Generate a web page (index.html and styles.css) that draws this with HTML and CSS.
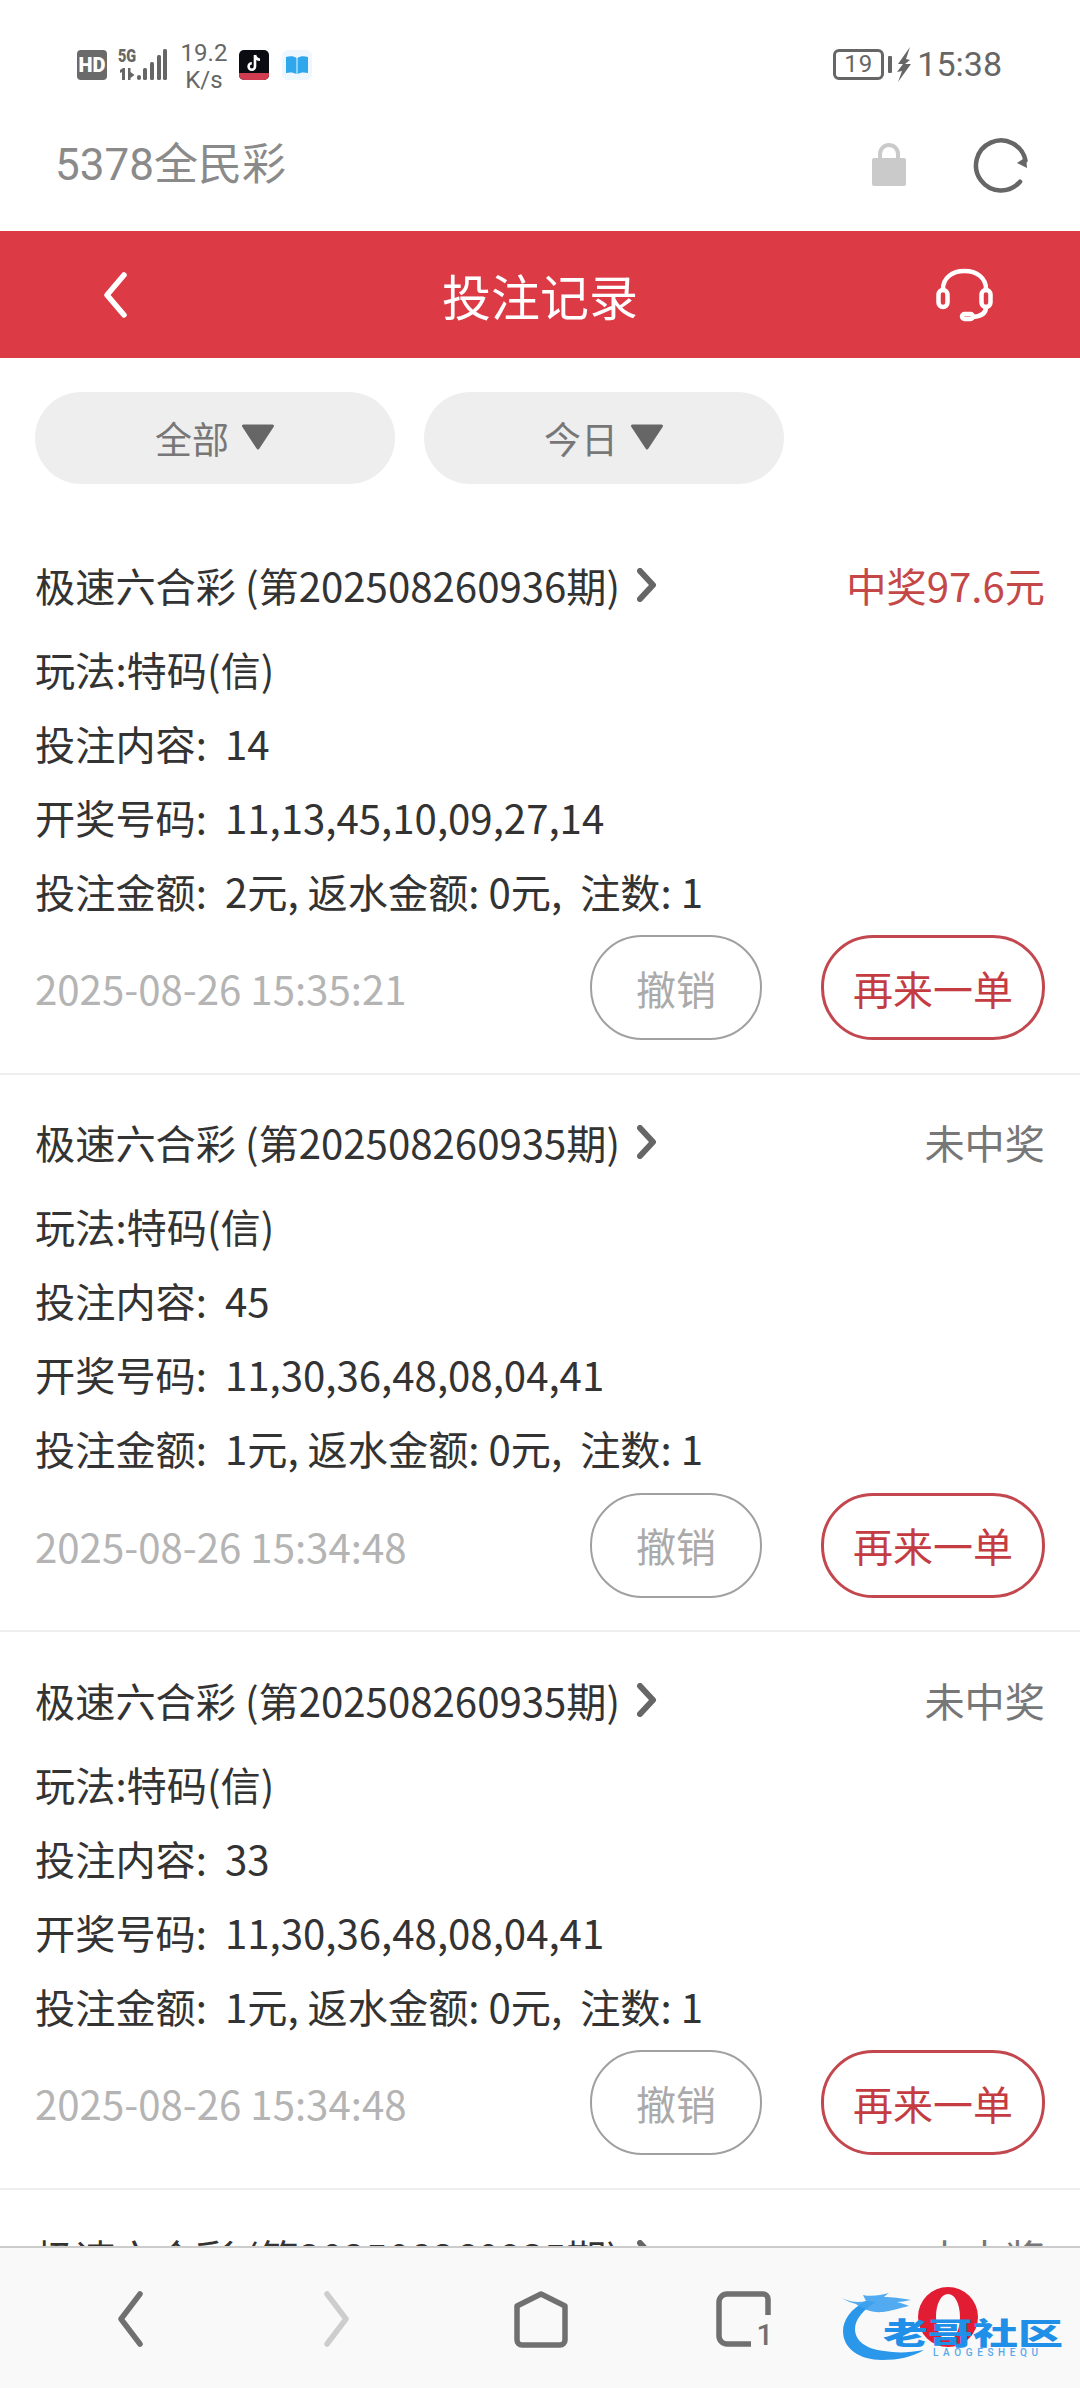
FILE: index.html
```
<!DOCTYPE html>
<html lang="zh">
<head>
<meta charset="utf-8">
<title>投注记录</title>
<link rel="stylesheet" href="styles.css">
</head>
<body>
<div class="screen">
  <div class="statusbar">
    <div class="status-left">
      <svg class="ic-hd" width="30" height="30" viewBox="0 0 30 30"><rect width="30" height="30" rx="4" fill="#6a6a6a"/><text x="15" y="22" text-anchor="middle" class="hd-text">HD</text></svg>
      <div class="signal">
        <span class="five-g">5G</span>
        <svg width="50" height="31" viewBox="0 0 50 31"><g fill="#666"><path d="M2 21l3-2h2v12H4V23l-2 1zM10 19h2.500v12H10zM12.500 23l4 3-4 3z"/><rect x="19" y="26" width="4" height="5" rx="2"/><rect x="25" y="19" width="4" height="12" rx="1.500"/><rect x="32" y="13" width="4" height="18" rx="1.500"/><rect x="39" y="6" width="4" height="25" rx="1.500"/><rect x="45" y="0" width="4" height="31" rx="1.500"/></g></svg>
      </div>
      <div class="speed"><span>19.2</span><span>K/s</span></div>
      <svg class="ic-app" width="30" height="30" viewBox="0 0 30 30"><rect width="30" height="30" rx="5" fill="#0b0b12"/><path d="M0 23h30v2a5 5 0 0 1-5 5H5a5 5 0 0 1-5-5z" fill="#d23c50"/><path d="M16 5v11.500a3.200 3.200 0 1 1-3.200-3.200M16 5c.5 3 2.500 4.500 5 4.700" fill="none" stroke="#fff" stroke-width="2.600"/></svg>
      <svg class="ic-app" width="30" height="30" viewBox="0 0 30 30"><rect width="30" height="30" rx="6" fill="#eef7fd"/><path d="M4 7c4-1 8-1 10.500 1v16C12 22.500 8 22 4 23zM26 7c-4-1-8-1-10.500 1v16c2.500-1.500 6.500-2 10.500-1z" fill="#2ea7ec"/></svg>
    </div>
    <div class="status-right">
      <div class="battery"><span>19</span></div>
      <span class="battery-nub"></span>
      <svg class="bolt" width="16" height="35" viewBox="0 0 16 35"><path d="M14 0 2 17h5L1 25l5-1-4 11 13-18H9l5-4-4-1z" fill="#666"/></svg>
      <span class="clock">15:38</span>
    </div>
  </div>

  <div class="appbar">
    <span class="app-name">5378全民彩</span>
    <div class="app-actions">
      <svg width="36" height="44" viewBox="0 0 36 44"><path d="M9 16V11a9 9 0 0 1 18 0v5" fill="none" stroke="#cacaca" stroke-width="4"/><rect x="1" y="15" width="34" height="28" rx="2" fill="#cacaca"/></svg>
      <svg width="58" height="58" viewBox="0 0 58 58"><path d="M48 45.700A25 25 0 1 1 53.500 24.500" fill="none" stroke="#666" stroke-width="4.500" stroke-linecap="round"/><path d="M45 27l10 5-1-11z" fill="#666"/></svg>
    </div>
  </div>

  <header class="titlebar">
    <svg class="tb-back" width="24" height="46" viewBox="0 0 24 46"><path d="M21 3 4 23l17 20" fill="none" stroke="#fff" stroke-width="5.500" stroke-linecap="round" stroke-linejoin="round"/></svg>
    <h1 class="page-title">投注记录</h1>
    <svg class="tb-help" width="57" height="54" viewBox="0 0 57 54"><g fill="none" stroke="#fff" stroke-width="4.500" stroke-linecap="round"><path d="M7 22v-1C7 10 16 3 28.500 3S50 10 50 21v1"/><rect x="2.500" y="22" width="9" height="17" rx="4.500"/><rect x="45.500" y="22" width="9" height="17" rx="4.500"/><path d="M50 39c0 7-6 9.500-13 10"/><rect x="26" y="46" width="11" height="5" rx="2.500"/></g></svg>
  </header>

  <div class="filters">
    <button class="pill">全部<svg class="tri" width="34" height="26" viewBox="0 0 34 26"><path d="M2.500 2h29L17 24z" fill="#666" stroke="#666" stroke-width="3" stroke-linejoin="round"/></svg></button>
    <button class="pill">今日<svg class="tri" width="34" height="26" viewBox="0 0 34 26"><path d="M2.500 2h29L17 24z" fill="#666" stroke="#666" stroke-width="3" stroke-linejoin="round"/></svg></button>
  </div>

  <main class="list">
    <article class="card">
      <div class="card-head">
        <div class="game">极速六合彩 (第202508260936期)<svg class="chev" width="20" height="34" viewBox="0 0 20 34"><path d="M3 3l13 14L3 31" fill="none" stroke="#666" stroke-width="6" stroke-linecap="round" stroke-linejoin="round"/></svg></div>
        <span class="status win">中奖97.6元</span>
      </div>
      <div class="rows">
        <p>玩法:特码(信)</p>
        <p>投注内容:&nbsp; 14</p>
        <p>开奖号码:&nbsp; 11,13,45,10,09,27,14</p>
        <p>投注金额:&nbsp; 2元, 返水金额: 0元,&nbsp; 注数: 1</p>
      </div>
      <div class="card-foot">
        <time>2025-08-26 15:35:21</time>
        <button class="btn btn-cancel">撤销</button>
        <button class="btn btn-again">再来一单</button>
      </div>
    </article>

    <article class="card">
      <div class="card-head">
        <div class="game">极速六合彩 (第202508260935期)<svg class="chev" width="20" height="34" viewBox="0 0 20 34"><path d="M3 3l13 14L3 31" fill="none" stroke="#666" stroke-width="6" stroke-linecap="round" stroke-linejoin="round"/></svg></div>
        <span class="status">未中奖</span>
      </div>
      <div class="rows">
        <p>玩法:特码(信)</p>
        <p>投注内容:&nbsp; 45</p>
        <p>开奖号码:&nbsp; 11,30,36,48,08,04,41</p>
        <p>投注金额:&nbsp; 1元, 返水金额: 0元,&nbsp; 注数: 1</p>
      </div>
      <div class="card-foot">
        <time>2025-08-26 15:34:48</time>
        <button class="btn btn-cancel">撤销</button>
        <button class="btn btn-again">再来一单</button>
      </div>
    </article>

    <article class="card">
      <div class="card-head">
        <div class="game">极速六合彩 (第202508260935期)<svg class="chev" width="20" height="34" viewBox="0 0 20 34"><path d="M3 3l13 14L3 31" fill="none" stroke="#666" stroke-width="6" stroke-linecap="round" stroke-linejoin="round"/></svg></div>
        <span class="status">未中奖</span>
      </div>
      <div class="rows">
        <p>玩法:特码(信)</p>
        <p>投注内容:&nbsp; 33</p>
        <p>开奖号码:&nbsp; 11,30,36,48,08,04,41</p>
        <p>投注金额:&nbsp; 1元, 返水金额: 0元,&nbsp; 注数: 1</p>
      </div>
      <div class="card-foot">
        <time>2025-08-26 15:34:48</time>
        <button class="btn btn-cancel">撤销</button>
        <button class="btn btn-again">再来一单</button>
      </div>
    </article>

    <article class="card">
      <div class="card-head">
        <div class="game">极速六合彩 (第202508260935期)<svg class="chev" width="20" height="34" viewBox="0 0 20 34"><path d="M3 3l13 14L3 31" fill="none" stroke="#666" stroke-width="6" stroke-linecap="round" stroke-linejoin="round"/></svg></div>
        <span class="status">未中奖</span>
      </div>
    </article>
  </main>

  <nav class="browser-nav">
    <svg class="nav-back" width="28" height="56" viewBox="0 0 28 56"><path d="M24 3 5 28l19 25" fill="none" stroke="#707070" stroke-width="5.500" stroke-linecap="round" stroke-linejoin="round"/></svg>
    <svg class="nav-forward" width="28" height="56" viewBox="0 0 28 56"><path d="M4 3l19 25L4 53" fill="none" stroke="#cdcdcd" stroke-width="5.500" stroke-linecap="round" stroke-linejoin="round"/></svg>
    <svg class="nav-home" width="56" height="58" viewBox="0 0 56 58"><path d="M28 3 4 15v34a5 5 0 0 0 5 5h38a5 5 0 0 0 5-5V15z" fill="none" stroke="#707070" stroke-width="5.500" stroke-linejoin="round"/></svg>
    <div class="tabs">
      <svg width="56" height="58" viewBox="0 0 56 58"><path d="M35 53H11a8 8 0 0 1-8-8V11a8 8 0 0 1 8-8h36a5 5 0 0 1 5 5v16" fill="none" stroke="#707070" stroke-width="5.500"/></svg>
      <span class="tab-count">1</span>
    </div>
    <div class="watermark">
      <svg class="wm-dragon" width="222" height="76" viewBox="0 0 222 76"><path d="M24 12C8 20 1 32 1 42c0 18 17 29 39 29 16 0 30-3 42-10-16 3-28 3-40 1C24 60 13 52 13 40c0-10 9-20 21-27z" fill="#2a97ea"/><path d="M0 9c8 4 16 5 24 3l-3-6c9 2 18 0 26-2-3 2-4 3-5 4 8 0 16 1 27 3-6 1-10 2-14 2 4 1 8 2 12 4-10 2-18 5-26 6-12 1-20-3-27-8C10 14 4 12 0 9z" fill="#3fa2ee" opacity=".9"/></svg>
      <svg class="wm-opera" width="60" height="60" viewBox="0 0 60 60"><path fill-rule="evenodd" d="M30 0a30 30 0 1 1 0 60 30 30 0 0 1 0-60zm0 7c-7 0-12 10-12 23s5 23 12 23 12-10 12-23S37 7 30 7z" fill="#e21c33"/></svg>
      <span class="wm-text">老哥社区</span>
      <span class="wm-sub">LAOGESHEQU</span>
    </div>
  </nav>
</div>
</body>
</html>
```
FILE: styles.css
```
* { box-sizing: border-box; margin: 0; padding: 0; }
html, body { width: 1080px; height: 2388px; overflow: hidden; background: #fff; }
body { font-family: "Noto Sans CJK SC", "Noto Sans", sans-serif; color: #333; }
.screen { width: 1080px; height: 2388px; display: flex; flex-direction: column; overflow: hidden; }

.statusbar { height: 78px; flex: none; padding: 36px 78px 0 77px; display: flex; justify-content: space-between; align-items: flex-start; color: #666; font-family: Roboto, sans-serif; }
.status-left { display: flex; align-items: flex-start; height: 42px; padding-top: 14px; }
.status-right { display: flex; align-items: center; height: 42px; padding-top: 14px; }
.hd-text { font: 900 20px Roboto, sans-serif; fill: #fff; }
.signal { position: relative; width: 50px; height: 31px; margin-left: 11px; margin-top: -1px; }
.five-g { position: absolute; left: 0; top: -2px; font: 900 19px/18px Roboto, sans-serif; color: #666; transform: scaleX(.76); transform-origin: left; }
.signal svg { display: block; }
.speed { display: flex; flex-direction: column; align-items: center; width: 44px; margin: -10px 13px 0 14px; font-size: 24px; line-height: 27px; }
.ic-app { margin-right: 13px; }
.battery { width: 51px; height: 31px; border: 3px solid #666; border-radius: 6px; display: flex; align-items: center; justify-content: center; font-size: 24px; line-height: 1; letter-spacing: 1px; }
.battery-nub { width: 4px; height: 17px; margin-left: 4px; background: #666; border-radius: 1px; }
.bolt { margin-left: 4px; }
.clock { font-size: 34px; margin-left: 5px; line-height: 1; }

.appbar { height: 153px; flex: none; display: flex; justify-content: space-between; align-items: center; padding: 21px 50px 0 55px; }
.app-name { font: 44px/1 Roboto, "Noto Sans CJK SC", sans-serif; color: #8a8a8a; }
.app-actions { display: flex; align-items: center; gap: 65px; }

.titlebar { height: 127px; flex: none; background: #dc3a44; display: grid; grid-template-columns: 1fr auto 1fr; align-items: center; padding: 0 87px 0 103px; }
.tb-help { justify-self: end; }
.page-title { font-size: 49px; font-weight: 400; color: #fff; line-height: 1; margin-right: 16px; }

.filters { flex: none; display: flex; gap: 29px; padding: 34px 35px 0; height: 159px; }
.pill { width: 360px; height: 92px; border: 0; border-radius: 46px; background: #eee; color: #777; font: 37px/1 "Noto Sans CJK SC", sans-serif; display: flex; align-items: center; justify-content: center; }
.tri { margin: -2px 0 0 12px; }

.list { flex: 1; min-height: 0; overflow: hidden; }
.card { height: 557.500px; padding: 39.500px 35px 0; border-bottom: 2px solid #eee; }
.card-head { display: flex; justify-content: space-between; align-items: center; height: 56px; }
.game { font-size: 40.200px; line-height: 56px; display: flex; align-items: center; color: #333; }
.chev { margin-left: 17px; }
.status { font-size: 40.200px; line-height: 56px; color: #777; }
.status.win { color: #c54848; }
.rows { margin-top: 19px; }
.rows p { font-size: 40.200px; line-height: 74px; height: 74px; }
.card-foot { display: flex; align-items: center; margin-top: 7.500px; }
.card-foot time { flex: 1; font-size: 40.200px; color: #b4b4b4; }
.btn { height: 105px; background: #fff; border-radius: 52px; font: 40px/1 "Noto Sans CJK SC", sans-serif; }
.btn-cancel { width: 172px; border: 2px solid #a0a0a0; color: #aaa; margin-right: 59px; }
.btn-again { width: 224px; border: 3px solid #c3474e; color: #c43c42; }

.browser-nav { position: relative; height: 142px; flex: none; background: #f9f9f9; border-top: 2px solid #ccc; display: flex; align-items: flex-start; padding: 43px 0 0 116px; }
.nav-forward { margin-left: 179px; }
.nav-home { margin-left: 162px; }
.tabs { position: relative; width: 60px; height: 58px; margin-left: 147px; }
.tab-count { position: absolute; right: 3px; bottom: -1px; font: 500 29px/1 Roboto, sans-serif; color: #707070; }
.watermark { position: absolute; left: 842px; top: 41px; width: 222px; height: 76px; }
.wm-dragon, .wm-opera { position: absolute; }
.wm-dragon { left: 0; top: 0; }
.wm-opera { left: 76px; top: -2px; }
.wm-text { position: absolute; left: 41px; top: 19px; width: 180px; font: 900 45px/46px "Noto Sans CJK SC", sans-serif; color: #1f8fe8; white-space: nowrap; transform: scaleY(.66); }
.wm-sub { position: absolute; left: 91px; top: 59px; font: 500 10px/10px Roboto, sans-serif; letter-spacing: 4.600px; color: #5aa9e8; white-space: nowrap; }
```
